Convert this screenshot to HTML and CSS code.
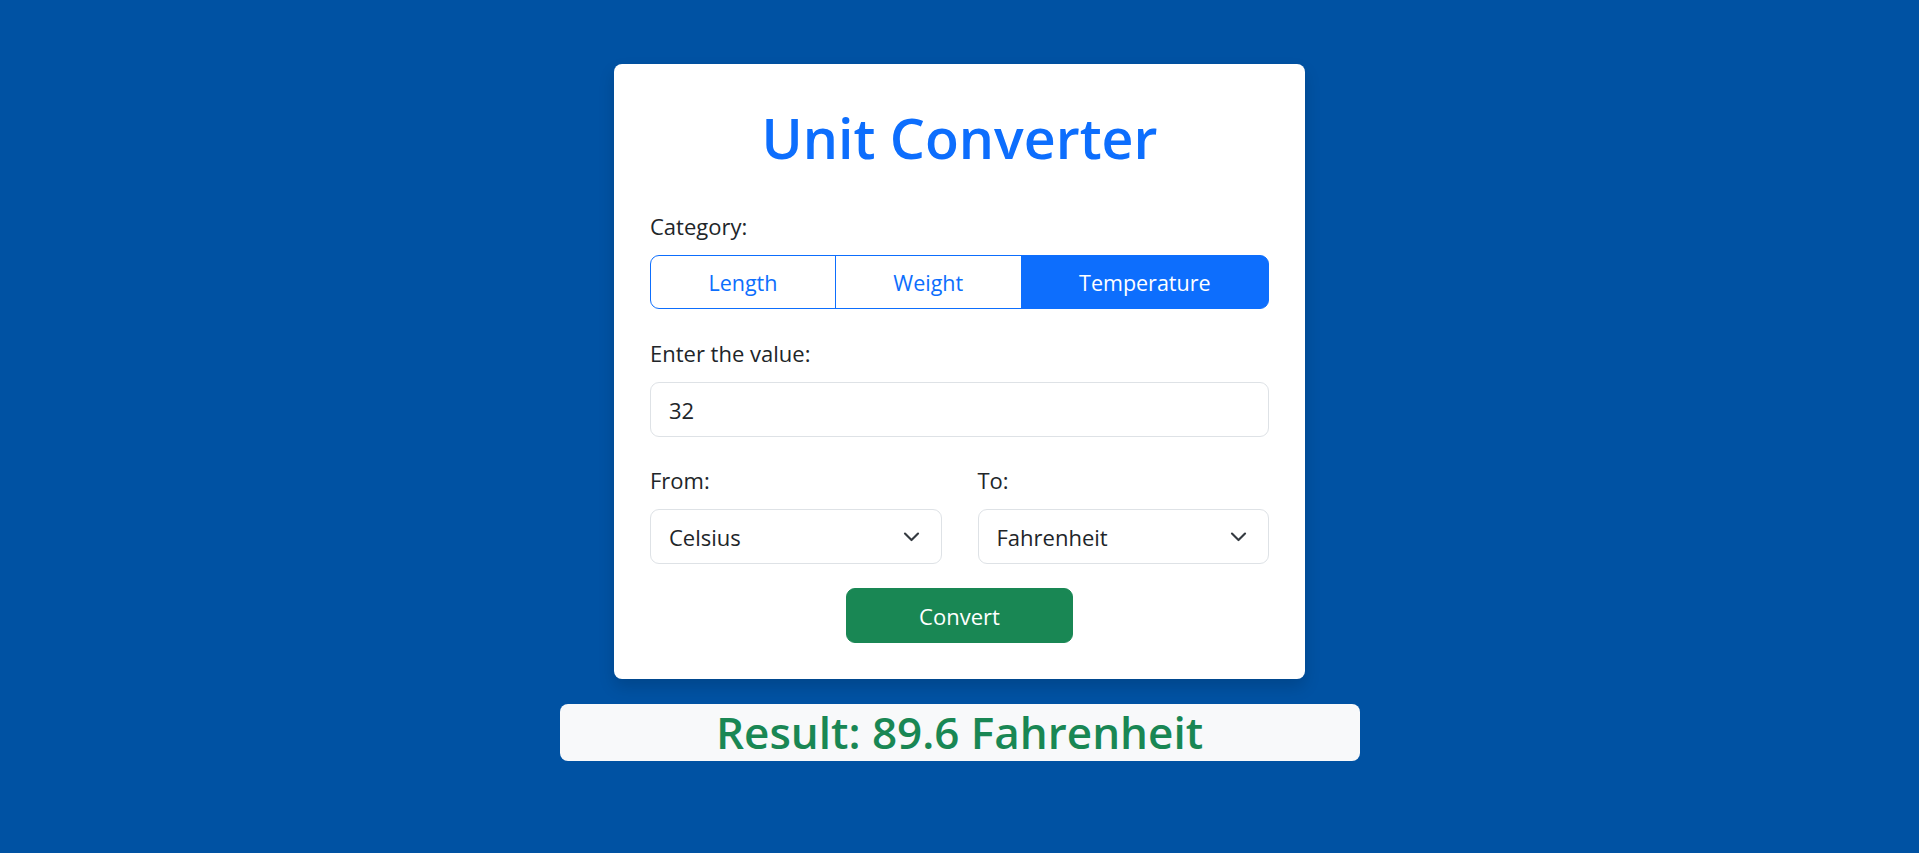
FILE: index.html
```html
<!DOCTYPE html>
<html lang="en">
<head>
<meta charset="utf-8">
<title>Unit Converter</title>
<link rel="stylesheet" href="styles.css">
</head>
<body>
<main class="page">
  <section class="card">
    <h1 class="title">Unit Converter</h1>

    <div class="field">
      <label class="label">Category:</label>
      <div class="btn-group">
        <button class="seg">Length</button>
        <button class="seg">Weight</button>
        <button class="seg active">Temperature</button>
      </div>
    </div>

    <div class="field field-value">
      <label class="label" for="value">Enter the value:</label>
      <input class="control" id="value" type="text" value="32">
    </div>

    <div class="field row">
      <div class="col">
        <label class="label" for="from">From:</label>
        <div class="select-wrap">
          <select class="control select" id="from"><option>Celsius</option></select>
          <svg class="chevron" viewBox="0 0 16 16" width="19" height="19"><path d="M2.5 5.5l5.5 5.5 5.5-5.5" fill="none" stroke="#343a40" stroke-width="1.8" stroke-linecap="round" stroke-linejoin="round"/></svg>
        </div>
      </div>
      <div class="col">
        <label class="label" for="to">To:</label>
        <div class="select-wrap">
          <select class="control select" id="to"><option>Fahrenheit</option></select>
          <svg class="chevron" viewBox="0 0 16 16" width="19" height="19"><path d="M2.5 5.5l5.5 5.5 5.5-5.5" fill="none" stroke="#343a40" stroke-width="1.8" stroke-linecap="round" stroke-linejoin="round"/></svg>
        </div>
      </div>
    </div>

    <div class="actions">
      <button class="convert">Convert</button>
    </div>
  </section>

  <h2 class="result">Result: 89.6 Fahrenheit</h2>
</main>
</body>
</html>
```

FILE: styles.css
```css
* { box-sizing: border-box; }

html, body {
  margin: 0;
  padding: 0;
}

body {
  min-height: 100vh;
  background: #0052a3;
  font-family: "Open Sans", "Noto Sans", sans-serif;
  color: #212529;
}

.page {
  display: flex;
  flex-direction: column;
  align-items: center;
  padding-top: 64px;
}

.card {
  width: 691px;
  background: #ffffff;
  border-radius: 8px;
  padding: 35px 36px 36px;
  box-shadow: 0 8px 16px rgba(0, 0, 0, 0.15);
}

.title {
  margin: 0 0 35.5px;
  padding-top: 3.5px;
  text-align: center;
  font-size: 55.5px;
  line-height: 69px;
  font-weight: 600;
  color: #0d6efd;
}

.field {
  margin-bottom: 25px;
}

.field-value {
  margin-bottom: 24px;
}

.label {
  display: block;
  font-size: 22px;
  line-height: 34.5px;
  padding-top: 1.5px;
  margin-bottom: 12px;
}

.btn-group {
  display: flex;
  height: 54px;
}

.seg {
  flex: 1 1 auto;
  font-family: inherit;
  font-size: 21.5px;
  color: #0d6efd;
  background: #ffffff;
  border: 1px solid #0d6efd;
  margin: 0;
  padding: 1px 20px 0;
}

.seg + .seg {
  margin-left: -1px;
}

.seg:first-child {
  border-radius: 9px 0 0 9px;
}

.seg:last-child {
  border-radius: 0 9px 9px 0;
}

.seg.active {
  background: #0d6efd;
  color: #ffffff;
}

.control {
  display: block;
  width: 100%;
  height: 55px;
  padding: 0 18px;
  font-family: inherit;
  font-size: 22px;
  color: #212529;
  background: #ffffff;
  border: 1px solid #dee2e6;
  border-radius: 9px;
  outline: none;
}

.row {
  display: flex;
  gap: 36px;
  margin-bottom: 24px;
}

.col {
  flex: 1 1 0;
}

.select-wrap {
  position: relative;
}

.select {
  appearance: none;
  -webkit-appearance: none;
  height: 55px;
}

.chevron {
  position: absolute;
  right: 21px;
  top: 18px;
  pointer-events: none;
}

.actions {
  display: flex;
  justify-content: center;
}

.convert {
  width: 227px;
  height: 55px;
  padding-top: 1px;
  font-family: inherit;
  font-size: 22px;
  color: #ffffff;
  background: #198754;
  border: 1px solid #198754;
  border-radius: 9px;
}

.result {
  margin: 25px 0 0;
  width: 800px;
  height: 57px;
  background: #f8f9fa;
  border-radius: 8px;
  text-align: center;
  font-size: 44px;
  line-height: 57px;
  font-weight: 600;
  color: #198754;
}
```
